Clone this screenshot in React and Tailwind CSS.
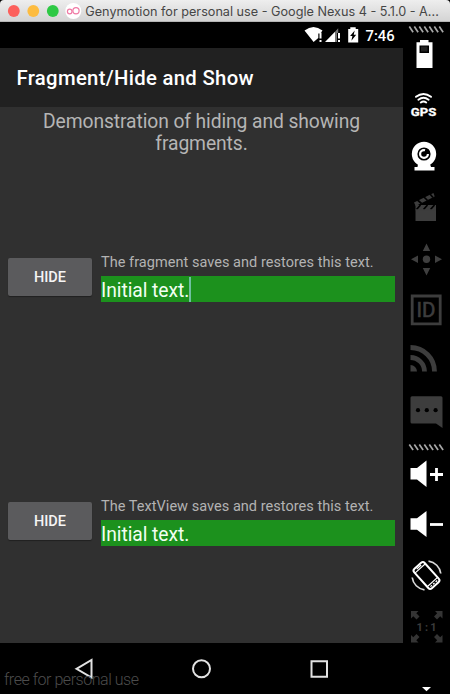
import React from "react";

const roboto = "font-[Roboto,sans-serif]";

/* Sidebar cell: y and h are the band of the toolbar that the icon occupies. */
function Tool({ y, h, children }) {
  return (
    <svg className="block shrink-0" width="47" height={h} viewBox={`403 ${y} 47 ${h}`}>
      {children}
    </svg>
  );
}

function Grip({ y }) {
  return (
    <g stroke="#a8a8a8" strokeWidth="1.7">
      {[0, 1, 2, 3, 4, 5, 6].map((i) => (
        <path key={i} d={`M${409.3 + i * 5} ${y}l3.8 5.6`} />
      ))}
    </g>
  );
}

function Toolbar() {
  return (
    <div className="flex w-[47px] shrink-0 flex-col bg-black">
      <Tool y={22} h={15}><Grip y={26.6} /></Tool>
      <Tool y={37} h={44}>
        <path fill="#fff" fillRule="evenodd" d="M420 40h8.500v2.300h4V68h-16V42.300h3.500zM419.500 45.500v7.500h9.500v-7.500z" />
        <path fill="#222" d="M421 46.500h6.500v5H421z" />
      </Tool>
      <Tool y={81} h={49}>
        <g fill="none" stroke="#fff" strokeWidth="2" strokeLinecap="round">
          <path d="M416 96.800q7.500-5.600 15 0M418.400 99.700q5.100-3.700 10.200 0M420.800 102.500q2.700-1.900 5.400 0" />
        </g>
        <text x="410.800" y="115.500" fill="#fff" stroke="#fff" strokeWidth=".3" fontSize="11" fontWeight="700" fontFamily="Roboto, sans-serif" textLength="25.500" lengthAdjust="spacingAndGlyphs">GPS</text>
      </Tool>
      <Tool y={130} h={52}>
        <circle cx="424" cy="154" r="9.400" fill="none" stroke="#fff" strokeWidth="5.600" />
        <circle cx="424" cy="154" r="3.900" fill="none" stroke="#fff" strokeWidth="2.200" strokeDasharray="19 5.500" />
        <path fill="#fff" d="M418 164h12l1 3h3.500v3.500h-20V167h3z" />
      </Tool>
      <Tool y={182} h={50}>
        <g fill="#3d3d3d">
          <path d="M415.500 205H436v16h-20.500z" />
          <path d="M414 202.500l19.500-9.500 1.200 3.500-19 9.500z" />
        </g>
        <path stroke="#000" strokeWidth="1.700" d="M417.500 200l4 3.500M424 197l3.500 3.500M430 194l3 3.500M420.500 205l-4 4.500M427.500 205l-4 4.500M434.500 205l-4 4.500" />
        <path stroke="#3d3d3d" strokeWidth="1" d="M415.500 209.800H436" />
      </Tool>
      <Tool y={232} h={52}>
        <g fill="#3f3f3f">
          <circle cx="426.500" cy="259.300" r="3.700" />
          <path d="M426.500 243.500l3.700 7.500h-7.400zM426.500 275.500l3.700-7.500h-7.400zM411 259.300l7-3.800v7.600zM442 259.300l-7-3.800v7.600z" />
        </g>
      </Tool>
      <Tool y={284} h={50}>
        <path fill="none" stroke="#3d3d3d" strokeWidth="2.800" d="M412.200 296h28v27.800h-28z" />
        <text x="416.500" y="317.300" fill="#3d3d3d" stroke="#3d3d3d" strokeWidth=".6" fontSize="20" fontFamily="Roboto, sans-serif" textLength="19" lengthAdjust="spacingAndGlyphs">ID</text>
      </Tool>
      <Tool y={334} h={50}>
        <path fill="#3d3d3d" d="M410.500 365a6.500 6.500 0 0 1 6.500 6.500h-6.500z" />
        <path fill="none" stroke="#3d3d3d" strokeWidth="4.800" d="M410.500 357.500a14 14 0 0 1 14 14M410.500 347.500a24 24 0 0 1 24 24" />
      </Tool>
      <Tool y={384} h={56}>
        <path fill="#3d3d3d" d="M412 396.300h29q1.500 0 1.500 1.500V428l-6.500-4.500h-24q-1.500 0-1.500-1.500v-24.200q0-1.500 1.500-1.500z" />
        <g><circle cx="418" cy="410.200" r="2.100" /><circle cx="426.800" cy="410.200" r="2.100" /><circle cx="435.600" cy="410.200" r="2.100" /></g>
      </Tool>
      <Tool y={440} h={14}><Grip y={444.500} /></Tool>
      <Tool y={454} h={46}>
        <path fill="#fff" d="M410.500 468h6.500l9.500-7.500v26.500l-9.500-7.500h-6.500z" />
        <path stroke="#fff" strokeWidth="2.800" d="M430 474.500h13M436.500 468v13" />
      </Tool>
      <Tool y={500} h={50}>
        <path fill="#fff" d="M410.500 518.300h6.500l9.500-7.300v26l-9.500-7.300h-6.500z" />
        <path stroke="#fff" strokeWidth="2.800" d="M430 524.500h13" />
      </Tool>
      <Tool y={550} h={52}>
        <g transform="translate(426.500 575.500) rotate(-42)">
          <rect x="-7" y="-13" width="14" height="26" rx="2.500" fill="none" stroke="#fff" strokeWidth="2" />
          <path stroke="#fff" strokeWidth="1.200" d="M-7-9.500h14M-7 8.800h14" />
          <path stroke="#fff" strokeWidth="1.300" d="M-4.500 10.900h2M-1 10.900h2M2.500 10.900h2M-3-11.300h6" />
        </g>
        <g fill="none" stroke="#d8d8d8" strokeWidth="1.700">
          <path d="M428.500 561.200a14.200 14.200 0 0 1 12.300 12.300M424.500 589.800a14.200 14.200 0 0 1-12.300-12.300" />
        </g>
      </Tool>
      <Tool y={602} h={48}>
        <g fill="#343434">
          {[[411, 611, 1, 1], [442.500, 611, -1, 1], [411, 642.500, 1, -1], [442.500, 642.500, -1, -1]].map(([x, y, a, b], i) => (
            <path key={i} transform={`translate(${x} ${y}) scale(${a} ${b})`} d="M0 0h7.500L5.300 2.300 8.500 5.500l-3 3-3.200-3.200L0 7.500z" />
          ))}
        </g>
        <text x="416.500" y="630.500" fill="#3b3b3b" fontSize="11" fontWeight="700" fontFamily="Roboto, sans-serif" textLength="20">1 : 1</text>
      </Tool>
      <Tool y={650} h={44}><path fill="#fff" d="M422 687h9l-4.500 4.300z" /></Tool>
    </div>
  );
}

function TitleBar() {
  return (
    <div className="flex h-[22px] items-center overflow-hidden rounded-t-[4px] border-b border-[#b5b5b5] bg-linear-to-b from-[#eeeeee] to-[#d4d4d4]">
      <svg className="block shrink-0" width="84" height="22" viewBox="0 0 84 22">
        <circle cx="13.800" cy="11" r="5.900" fill="#fc605c" />
        <circle cx="33.300" cy="11" r="5.900" fill="#fdbc40" />
        <circle cx="52.800" cy="11" r="5.900" fill="#2ec945" />
        <circle cx="73.300" cy="11" r="8" fill="#fff" />
        <g fill="none" stroke="#f07aa5" strokeWidth="1.200"><circle cx="69.700" cy="11.500" r="2.300" /><circle cx="76" cy="10.700" r="3.100" /></g>
      </svg>
      <svg className="block" width="366" height="22" viewBox="84 0 366 22">
        <text x="85.300" y="15.500" fill="#464646" fontSize="12.600" fontFamily="Inter, sans-serif" textLength="353.500" lengthAdjust="spacingAndGlyphs">Genymotion for personal use - Google Nexus 4 - 5.1.0 - A...</text>
      </svg>
    </div>
  );
}

function StatusBar() {
  return (
    <div className="flex h-[26px] justify-end bg-black">
      <svg className="block" width="65" height="26" viewBox="300 22 65 26">
        <path fill="#fff" d="M304.500 30.500q9-7 18 0l-2.200 3h-2v4.500L313.600 42z" />
        <path fill="#fff" d="M319.500 32.500h2v6h-2zM319.500 40h2v2h-2zM325 42h10V31.800z" />
        <path fill="#777" d="M335 31.800l3.200-3.500V33H337v9h-2z" />
        <path fill="#fff" d="M338 33h2v5.500h-2zM338 40h2v2h-2z" />
        <path fill="#fff" d="M350.300 27.300h5.400v1.700h2.500v13.500h-10V29h2.100z" />
        <path fill="#000" d="M354.700 30.500l-4.600 5.500h2.300l-1 4.700 4.800-5.900h-2.500z" />
      </svg>
      <span className={`${roboto} w-[38px] pl-[0.5px] text-[14.8px] font-medium leading-[28px] text-white`}>7:46</span>
    </div>
  );
}

function HideRow({ label, focused }) {
  return (
    <div className="flex items-start pl-2">
      <button className={`${roboto} h-[38px] w-[84px] shrink-0 rounded-[2px] bg-[#5b5b5d] pt-px text-[14.5px] font-medium text-[#f5f5f5] shadow-[0_1px_1px_rgba(0,0,0,0.35)]`}>
        HIDE
      </button>
      <div className="-mt-[5px] ml-[9px] w-[294px]">
        <div className={`${roboto} h-[23px] whitespace-nowrap text-[14.5px] leading-[20px] tracking-[0.04px] text-[#b3b3b3]`}>{label}</div>
        <div className={`${roboto} flex h-[26px] items-center bg-[#1c911d] text-[19.3px] leading-[26px] tracking-[-0.06px] text-[#f2fff2]`}>
          <span className="pt-[3px]">Initial text.</span>
          {focused && <span className="h-[25px] w-[1.5px] bg-[#6fc0a0]" />}
        </div>
      </div>
    </div>
  );
}

function NavBar() {
  return (
    <div className="relative h-[51px] bg-black">
      <svg className="block" width="403" height="51" viewBox="0 643 403 51" fill="none" stroke="#e2e2e2" strokeWidth="2">
        <path d="M76.500 668.800L91.500 660v17.600z" />
        <circle cx="201.500" cy="668.800" r="8.500" />
        <path d="M311.500 661.200h15.500v15.500h-15.500z" />
      </svg>
      <span className={`${roboto} absolute left-1 top-[27px] whitespace-nowrap text-[16px] font-light leading-5 tracking-[-0.46px] text-[#4c4c4c]`}>free for personal use</span>
    </div>
  );
}

export default function App() {
  return (
    <div className="flex h-[694px] w-[450px] flex-col overflow-hidden bg-black">
      <TitleBar />
      <div className="flex flex-1">
        <div className="flex w-[403px] shrink-0 flex-col">
          <StatusBar />
          <header className={`${roboto} h-[59px] bg-[#212121] pl-[16.5px] text-[20.3px] font-medium leading-[61px] tracking-[0.32px] text-white`}>
            Fragment/Hide and Show
          </header>
          <main className="h-[536px] bg-[#303030]">
            <p className={`${roboto} h-[151px] pt-[4px] text-center text-[19.3px] leading-[22px] tracking-[-0.1px] text-[#b5b5b5]`}>
              Demonstration of hiding and showing<br />fragments.
            </p>
            <div className="h-[244px]"><HideRow label="The fragment saves and restores this text." focused /></div>
            <HideRow label="The TextView saves and restores this text." />
          </main>
          <NavBar />
        </div>
        <Toolbar />
      </div>
    </div>
  );
}
